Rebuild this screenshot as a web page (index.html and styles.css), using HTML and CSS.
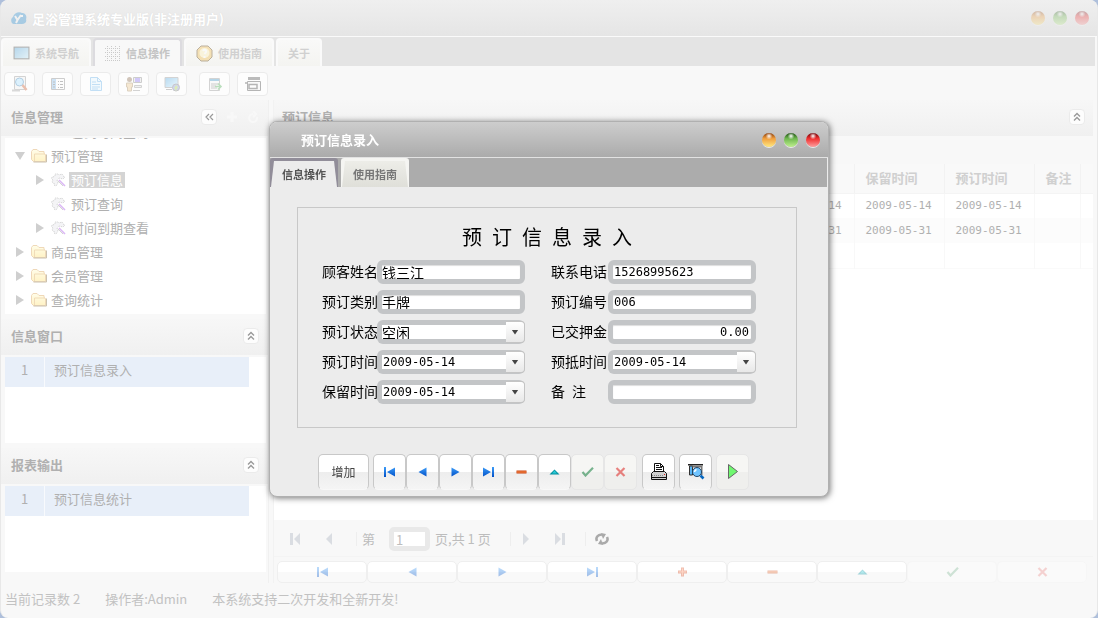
FILE: index.html
```html
<!DOCTYPE html>
<html lang="zh-CN">
<head>
<meta charset="utf-8">
<title>足浴管理系统专业版</title>
<link rel="stylesheet" href="styles.css">
</head>
<body>
<svg class="defs" aria-hidden="true">
  <defs>
    <linearGradient id="g-blue" x1="0" y1="0" x2="0" y2="1"><stop offset="0" stop-color="#3c9cf8"/><stop offset="1" stop-color="#0050c8"/></linearGradient>
    <linearGradient id="g-screen" x1="0" y1="0" x2="1" y2="1"><stop offset="0" stop-color="#3c9ad8"/><stop offset="1" stop-color="#c4ecff"/></linearGradient>
    <linearGradient id="g-folder" x1="0" y1="0" x2="0" y2="1"><stop offset="0" stop-color="#fffbc8"/><stop offset="1" stop-color="#ffe070"/></linearGradient>
  </defs>
  <symbol id="first" viewBox="0 0 13 10"><path d="M1 0h2v10H1zM12 .5v9L4 5z" fill="url(#g-blue)"/></symbol>
  <symbol id="prev" viewBox="0 0 13 10"><path d="M10.500 .5v9L2.500 5z" fill="url(#g-blue)"/></symbol>
  <symbol id="next" viewBox="0 0 13 10"><path d="M2.500 .5v9l8-4.500z" fill="url(#g-blue)"/></symbol>
  <symbol id="last" viewBox="0 0 13 10"><path d="M10 0h2v10h-2zM1 .5v9l8-4.500z" fill="url(#g-blue)"/></symbol>
  <symbol id="minus" viewBox="0 0 13 10"><path d="M1.500 3.500h10v3h-10z" fill="#c8400c"/><path d="M2 4.500h9v1H2z" fill="#ff9050"/></symbol>
  <symbol id="plus" viewBox="0 0 13 10"><path d="M5 .5h3v3h3v3H8v3H5v-3H2v-3h3z" fill="#d8481c"/><path d="M6 1.500h1v3h3v1H7v3H6v-3H3v-1h3z" fill="#ff9060"/></symbol>
  <symbol id="up" viewBox="0 0 13 10"><path d="M1.500 7.500L6.500 2.500l5 5z" fill="#0090a0"/><path d="M4 6.500l2.500-3 2.500 3z" fill="#28c8d4"/></symbol>
  <symbol id="check" viewBox="0 0 13 10"><path d="M1.500 5l3 3.500L12 .8" fill="none" stroke="#359058" stroke-width="2.200"/></symbol>
  <symbol id="cross" viewBox="0 0 13 10"><path d="M2.500 1l8 8M10.500 1l-8 8" stroke="#e04440" stroke-width="2.200"/></symbol>
  <symbol id="folder" viewBox="0 0 16 14"><path d="M.5 10.500v-8l1.500-2h4l2 2h5v2l1.500 1v7H2.500z" fill="url(#g-folder)" stroke="#d8a050"/><path d="M3.500 12V5H14" fill="none" stroke="#dca850"/><path d="M15.500 5.500v7.500H2.500" fill="none" stroke="#806838"/></symbol>
  <symbol id="gear" viewBox="0 0 16 14"><path d="M2 4l2-1 0-2 3 0 1 1 3-1 1 2 2 1-2 2-4-1-2 2 1 3-2 3-2-1 0-2-2-1 1-2-2-2z" fill="#e4e6ea" stroke="#888" stroke-dasharray="1 1"/><path d="M8 7l6 6" stroke="#a850e8" stroke-width="1.600"/><path d="M7 8l5 5" stroke="#777" stroke-width=".8"/></symbol>
  <symbol id="collapse" viewBox="0 0 10 10"><path d="M2 4.500L5 1.500l3 3M2 8.500L5 5.500l3 3" fill="none" stroke="#999" stroke-width="1.400"/></symbol>
  <symbol id="monitor" viewBox="0 0 16 14"><rect x="1" y="1" width="14" height="11" fill="url(#g-screen)" stroke="#333"/></symbol>
</svg>

<div class="window">
  <header class="titlebar">
    <svg class="logo faded" viewBox="0 0 16 14"><path d="M3 13C0 13-1 8 2 6 3 2 8 0 11 2c4 0 5 4 4 6 1 3-1 5-4 5z" fill="#2f94d8"/><path d="M4 5l2.500 4L10 4M6.500 9L5 12M10 5h2" fill="none" stroke="#fff" stroke-width="2"/></svg>
    <h1>足浴管理系统专业版(非注册用户)</h1>
    <div class="orbs faded"><button class="orb amber" aria-label="最小化"></button><button class="orb green" aria-label="最大化"></button><button class="orb red" aria-label="关闭"></button></div>
  </header>
  <nav class="tabs">
    <button class="tab"><svg class="faded" width="17" height="15"><use href="#monitor"/></svg>系统导航</button>
    <button class="tab on"><svg class="faded" width="16" height="15" viewBox="0 0 16 15"><path d="M2.500 0v15M6.500 0v15M10.500 0v15M14.500 0v15M0 2.500h16M0 6.500h16M0 10.500h16M0 14.500h16" stroke="#777" stroke-dasharray="1 1"/></svg>信息操作</button>
    <button class="tab"><svg class="faded" width="17" height="17" viewBox="0 0 17 17"><path d="M5 1h7l4 4v7l-4 4H5l-4-4V5z" fill="#f0b840" stroke="#503000"/><circle cx="8.500" cy="8" r="5" fill="#fff0b0"/><path d="M7 6c1-2 4-1 3 1l-1.500 2M8.500 11v2" fill="none" stroke="#fff" stroke-width="2"/></svg>使用指南</button>
    <button class="tab">关于</button>
  </nav>
  <div class="toolbar">
    <button aria-label="查找"><svg class="faded" viewBox="0 0 18 18"><path d="M3.500 1.500h11v13h-11z" fill="#eee" stroke="#888"/><circle cx="8.500" cy="7" r="4" fill="#a0dcff" stroke="#2878b0"/><path d="M11.500 10l4 5" stroke="#c85020" stroke-width="2.500"/><path d="M1 15.500h8" stroke="#999" stroke-width="2"/></svg></button>
    <button aria-label="列表"><svg class="faded" viewBox="0 0 18 18"><path d="M2.500 3.500h13v11h-13z" fill="#fff" stroke="#777"/><path d="M3 4h4v10H3z" fill="#78b4e8"/><path d="M4 7h2M4 9.500h2M4 12h2M9 6.500h1M11 6.500h3M9 9.500h1M11 9.500h3M9 12.500h1M11 12.500h3" stroke="#555"/></svg></button>
    <button aria-label="新建"><svg class="faded" viewBox="0 0 18 18"><path d="M3.500 2.500h7l4 4v9h-11z" fill="#e0f2ff" stroke="#58a8e8"/><path d="M10.500 2.500v4h4M5 7h4M5 9.500h8M5 12h8M5 14h6" fill="none" stroke="#58a8e8"/></svg></button>
    <button aria-label="操作员"><svg class="faded" viewBox="0 0 18 18"><path d="M8.500 2.500h8v5h-8z" fill="#ddd" stroke="#777"/><path d="M10 3h5v4h-5z" fill="#8068f0"/><path d="M9.500 10.500h7v2h-7zM8 15.500h7" fill="#ddd" stroke="#888"/><circle cx="4.500" cy="4.500" r="2.500" fill="#806040"/><path d="M1.500 8h6v4h-1v4h-4v-4h-1z" fill="#e8c080" stroke="#a08050"/></svg></button>
    <button aria-label="网络"><svg class="faded" viewBox="0 0 18 18"><path d="M2 2.500h13v10H2z" fill="url(#g-screen)" stroke="#888"/><path d="M3 14.500h6" stroke="#777"/><circle cx="13" cy="12.500" r="3.500" fill="#7888e0" stroke="#666"/><path d="M11 13l2-3 2 2-2 4z" fill="#a0c840"/></svg></button>
    <button class="apart" aria-label="导出"><svg class="faded" viewBox="0 0 18 18"><path d="M3.500 3.500h10v12h-10z" fill="#f2f2f2" stroke="#888"/><path d="M4 4h9v2H4z" fill="#308cc0"/><path d="M5 9h7M5 11h5M5 13h6" stroke="#777"/><path d="M9 11.500h6M12 8.500l3 3-3 3" fill="none" stroke="#40a848" stroke-width="1.600"/></svg></button>
    <button aria-label="打印"><svg class="faded" viewBox="0 0 18 18"><path d="M4 2h12v3H4z" fill="#444"/><path d="M3.500 6.500h13v9h-13z" fill="#f4f4f4" stroke="#333"/><path d="M1 8h3M5 9.500h8v4H5z" fill="#fff" stroke="#333" stroke-width="1.500"/></svg></button>
  </div>

  <div class="main">
    <aside class="side">
      <section class="panel grow">
        <header class="phead"><h2>信息管理</h2>
          <div class="ptools">
            <button class="mini" aria-label="收起"><svg viewBox="0 0 10 10"><path d="M5 2L2 5l3 3M9 2L6 5l3 3" fill="none" stroke="#999" stroke-width="1.200"/></svg></button>
            <button class="ghost" aria-label="添加"><svg viewBox="0 0 12 12"><path d="M6 1v10M1 6h10" stroke="#f8f8f8" stroke-width="3"/></svg></button>
            <button class="ghost" aria-label="刷新"><svg viewBox="0 0 12 12"><path d="M10 6A4 4 0 1 1 6 3M6 0l3 3-3 3" fill="none" stroke="#f8f8f8" stroke-width="2"/></svg></button>
          </div>
        </header>
        <div class="pbody treebox">
          <ul class="tree">
            <li class="sub"><i></i><svg></svg><span>已到时间查询</span></li>
            <li><i class="open"></i><svg><use href="#folder"/></svg><span>预订管理</span></li>
            <li class="sub"><i class="shut"></i><svg><use href="#gear"/></svg><span class="sel">预订信息</span></li>
            <li class="sub"><i></i><svg><use href="#gear"/></svg><span>预订查询</span></li>
            <li class="sub"><i class="shut"></i><svg><use href="#gear"/></svg><span>时间到期查看</span></li>
            <li><i class="shut"></i><svg><use href="#folder"/></svg><span>商品管理</span></li>
            <li><i class="shut"></i><svg><use href="#folder"/></svg><span>会员管理</span></li>
            <li><i class="shut"></i><svg><use href="#folder"/></svg><span>查询统计</span></li>
          </ul>
        </div>
      </section>
      <section class="panel">
        <header class="phead"><h2>信息窗口</h2><button class="mini" aria-label="折叠信息窗口"><svg><use href="#collapse"/></svg></button></header>
        <div class="pbody short"><a class="entry" href="#"><b>1</b><span>预订信息录入</span></a></div>
      </section>
      <section class="panel">
        <header class="phead"><h2>报表输出</h2><button class="mini" aria-label="折叠报表输出"><svg><use href="#collapse"/></svg></button></header>
        <div class="pbody short"><a class="entry" href="#"><b>1</b><span>预订信息统计</span></a></div>
      </section>
    </aside>

    <section class="content">
      <header class="phead"><h2>预订信息</h2><button class="mini" aria-label="折叠预订信息"><svg><use href="#collapse"/></svg></button></header>
      <div class="gridbox">
        <table>
          <colgroup><col><col class="date"><col class="date"><col class="date"><col class="note"><col class="end"></colgroup>
          <thead><tr><th></th><th></th><th>保留时间</th><th>预订时间</th><th>备注</th><th></th></tr></thead>
          <tbody>
            <tr><td></td><td>2009-05-14</td><td>2009-05-14</td><td>2009-05-14</td><td></td><td></td></tr>
            <tr><td></td><td>2009-05-31</td><td>2009-05-31</td><td>2009-05-31</td><td></td><td></td></tr>
            <tr><td></td><td></td><td></td><td></td><td></td><td></td></tr>
          </tbody>
        </table>
      </div>
      <div class="pager">
        <button aria-label="首页"><svg viewBox="0 0 12 12"><path d="M1 0h3v12H1zM11 0v12L5 6z"/></svg></button>
        <button class="step" aria-label="上一页"><svg viewBox="0 0 12 12"><path d="M9 0v12L3 6z"/></svg></button>
        <i></i>
        <label for="page">第</label><input id="page" value="1"><span>页,共 1 页</span>
        <i class="wide"></i>
        <button aria-label="下一页"><svg viewBox="0 0 12 12"><path d="M3 0v12l6-6z"/></svg></button>
        <button class="step" aria-label="末页"><svg viewBox="0 0 12 12"><path d="M8 0h3v12H8zM1 0v12l6-6z"/></svg></button>
        <i class="wide"></i>
        <button class="reload" aria-label="刷新数据"><svg viewBox="0 0 14 12"><path d="M2 8C0 4 4 1 7 2M12 4c2 4-2 7-5 6" fill="none" stroke="#aaa" stroke-width="2.600"/><path d="M6 0l5 1-3 5zM8 12l-5-1 3-5z" fill="#aaa"/></svg></button>
      </div>
      <div class="navrow">
        <button aria-label="第一条"><svg><use href="#first"/></svg></button>
        <button aria-label="上一条"><svg><use href="#prev"/></svg></button>
        <button aria-label="下一条"><svg><use href="#next"/></svg></button>
        <button aria-label="最后一条"><svg><use href="#last"/></svg></button>
        <button aria-label="新增"><svg><use href="#plus"/></svg></button>
        <button aria-label="删除"><svg><use href="#minus"/></svg></button>
        <button aria-label="编辑"><svg><use href="#up"/></svg></button>
        <button class="off" aria-label="保存" disabled><svg><use href="#check"/></svg></button>
        <button class="off" aria-label="取消" disabled><svg><use href="#cross"/></svg></button>
      </div>
    </section>
  </div>
  <footer class="status"><span>当前记录数 2</span><span>操作者:Admin</span><span>本系统支持二次开发和全新开发!</span></footer>
</div>

<div class="overlay">
  <div class="dialog" role="dialog" aria-labelledby="dlg-title">
    <header class="dtitle"><h2 id="dlg-title">预订信息录入</h2>
      <div class="orbs"><button class="orb amber" aria-label="最小化窗口"></button><button class="orb green" aria-label="最大化窗口"></button><button class="orb red" aria-label="关闭窗口"></button></div>
    </header>
    <nav class="dtabs"><button class="dtab on">信息操作</button><button class="dtab">使用指南</button></nav>
    <form class="form">
      <h3>预&ensp;订&ensp;信&ensp;息&ensp;录&ensp;入</h3>
      <div class="fields">
        <label for="name">顾客姓名</label><input class="box cjk" id="name" value="钱三江">
        <label for="tel">联系电话</label><input class="box" id="tel" value="15268995623">
        <label for="kind">预订类别</label><input class="box cjk" id="kind" value="手牌">
        <label for="code">预订编号</label><input class="box" id="code" value="006">
        <label for="state">预订状态</label><div class="combo"><select class="cjk" id="state"><option>空闲</option></select><span class="drop"></span></div>
        <label for="paid">已交押金</label><input class="box num" id="paid" value="0.00">
        <label for="booked">预订时间</label><div class="combo"><input id="booked" value="2009-05-14"><button type="button" class="drop" aria-label="选择预订时间"></button></div>
        <label for="arrive">预抵时间</label><div class="combo"><input id="arrive" value="2009-05-14"><button type="button" class="drop" aria-label="选择预抵时间"></button></div>
        <label for="keep">保留时间</label><div class="combo"><input id="keep" value="2009-05-14"><button type="button" class="drop" aria-label="选择保留时间"></button></div>
        <label for="note">备&ensp;注</label><input class="box" id="note">
      </div>
    </form>
    <div class="actions">
      <button class="add">增加</button>
      <div class="joined">
        <button aria-label="首条"><svg><use href="#first"/></svg></button>
        <button aria-label="前一条"><svg><use href="#prev"/></svg></button>
        <button aria-label="后一条"><svg><use href="#next"/></svg></button>
        <button aria-label="末条"><svg><use href="#last"/></svg></button>
        <button aria-label="删除记录"><svg><use href="#minus"/></svg></button>
        <button aria-label="编辑记录"><svg><use href="#up"/></svg></button>
        <button class="off" aria-label="提交" disabled><svg><use href="#check"/></svg></button>
        <button class="off" aria-label="撤销" disabled><svg><use href="#cross"/></svg></button>
      </div>
      <button aria-label="打印单据"><svg class="big" viewBox="0 0 18 18"><path d="M4.500 8.500v-8h6l3 3v5" fill="#fff" stroke="#111"/><path d="M6 2.500h3M6 4.500h6M6 6.500h6M10.500 .5v3h3" fill="none" stroke="#111"/><path d="M1.500 10.500l2-2h11l2 2v6h-15z" fill="#d0d0d0" stroke="#111"/><path d="M2 14.500h14" stroke="#111"/><path d="M2 12.500h11" stroke="#888" stroke-dasharray="1 1"/><path d="M14 11.500h1" stroke="#e02020"/></svg></button>
      <button aria-label="预览"><svg class="big" viewBox="0 0 18 18"><path d="M1 1h15v1.500H1z" fill="#222"/><path d="M2.500 3h3v9h-3z" fill="#58b4f4" stroke="#333"/><path d="M5.500 3h10v1.500h-10zM14 4h1.500v8H14z" fill="#777"/><circle cx="10" cy="9" r="4.500" fill="#70c4ff" stroke="#246"/><path d="M7.500 9a3 3 0 0 1 2-2.500" fill="none" stroke="#fff" stroke-width="1.600"/><path d="M13.500 12.500l3 3" stroke="#0868c0" stroke-width="2.600"/></svg></button>
      <button class="off" aria-label="执行"><svg class="big" viewBox="0 0 18 18"><path d="M4.500 1.500v14l9-7z" fill="#70f870" stroke="#666"/></svg></button>
    </div>
  </div>
</div>
</body>
</html>
```

FILE: styles.css
```css
* { box-sizing: border-box; }
body { margin: 0; background: #aebfdb; font: 13px/18px "Noto Sans CJK SC", "Noto Sans", sans-serif; color: #b0b0b0; }
h1, h2, h3, ul { margin: 0; padding: 0; font-size: 13px; }
button, input, select { font: inherit; color: inherit; margin: 0; padding: 0; border: 0; background: none; min-width: 0; }
button { display: flex; align-items: center; justify-content: center; }
svg { display: block; flex: none; }
.defs { position: absolute; width: 0; height: 0; }
.faded { opacity: .35; }

/* Main window */
.window { height: 100vh; min-height: 560px; display: flex; flex-direction: column; background: #f8f8f8; border: 1px solid #e8e8e8; border-width: 0 1px; border-radius: 8px; overflow: hidden; }
.titlebar { height: 37px; flex: none; display: flex; align-items: center; gap: 5px; padding: 0 8px 0 10px; background: linear-gradient(#efefef, #e5e5e5); border-bottom: 1px solid #fafafa; }
.titlebar h1 { flex: 1; padding-top: 1px; color: #fff; text-shadow: 0 0 1px #d4d4d4; }
.logo { width: 16px; height: 14px; }
.orbs { display: flex; gap: 8px; }
.orbs.faded { opacity: .3; }
.orb { width: 14px; height: 14px; border-radius: 50%; box-shadow: 0 1px 0 rgba(255, 255, 255, .7); }
.amber { background: radial-gradient(circle at 50% 22%, #fff 0, transparent 26%), linear-gradient(#8c3c08, #f0a040 40%, #ffe880); }
.green { background: radial-gradient(circle at 50% 22%, #fff 0, transparent 26%), linear-gradient(#1c5010, #70b850 40%, #c0f090); }
.red { background: radial-gradient(circle at 50% 22%, #fff 0, transparent 26%), linear-gradient(#700408, #f03030 40%, #ffa0a0); }

.tabs { height: 29px; flex: none; display: flex; gap: 2px; margin-right: 2px; background: #e4e4e4; }
.tab { height: 28px; margin-top: 1px; padding: 0 10px; gap: 5px; font-size: 11px; font-weight: bold; color: #d0d0d0; background: linear-gradient(#f9f9f8, #f4f4f1); border: 1px solid #fafafa; border-width: 2px 2px 0; border-radius: 4px 4px 0 0; }
.tab.on { color: #c4c4c4; background: #f8f8f8; border-color: #dcdbdf; }

.toolbar { height: 34px; flex: none; display: flex; align-items: center; gap: 7px; padding: 2px 3px 0; }
.toolbar button { width: 31px; height: 24px; }
.toolbar button, .mini { background: #fdfdfd; border: 1px solid #ebebeb; border-radius: 4px; }
.toolbar .apart { margin-left: 5px; }
.toolbar svg { width: 18px; height: 18px; }

.main { flex: 1; min-height: 0; display: flex; gap: 4px; }
.side { width: 268px; flex: none; display: flex; flex-direction: column; gap: 5px; padding-bottom: 11px; border-right: 1px solid #f0f0f0; }
.panel.grow { flex: 1; min-height: 0; display: flex; flex-direction: column; }
.phead { height: 36px; flex: none; display: flex; align-items: center; justify-content: space-between; padding: 0 8px 2px 10px; background: linear-gradient(#f7f7f7, #f0f0f0); }
.side .phead { padding-right: 9px; }
.mini { width: 16px; height: 16px; }
.mini svg { width: 10px; height: 10px; }
.ptools { display: flex; gap: 9px; }
.ghost svg { width: 12px; height: 12px; }
.pbody { margin: 2px 2px 0 4px; background: #fff; }
.short { height: 86px; }
.treebox { flex: 1; min-height: 0; overflow: hidden; }
.tree { list-style: none; margin-top: -18px; }
.tree li { height: 24px; display: flex; align-items: center; padding-left: 10px; }
.tree .sub { padding-left: 30px; }
.tree i { width: 16px; flex: none; }
.tree i::before { content: ""; display: block; width: 8px; height: 10px; background: #cfcfcf; }
.tree i:not(.open):not(.shut)::before { background: none; }
.tree .shut::before { clip-path: polygon(0 0, 100% 50%, 0 100%); margin-left: 1px; }
.tree .open::before { width: 10px; height: 8px; clip-path: polygon(0 0, 100% 0, 50% 100%); }
.tree svg { width: 16px; height: 14px; opacity: .4; }
.tree span { padding: 0 2px; margin-left: 2px; line-height: 16px; }
.tree .sel { background: #d4d4d4; color: #fff; }
.entry { display: flex; width: 244px; height: 30px; color: inherit; text-decoration: none; background: #e8eff9; line-height: 25px; }
.entry b { width: 40px; font-weight: normal; text-align: center; border-right: 1px solid #f8fafd; }
.entry span { padding-left: 9px; }

.content { flex: 1; min-width: 0; display: flex; flex-direction: column; margin-right: 4px; border-left: 1px solid #f2f2f2; }
.content > .phead { padding-left: 8px; }
.gridbox { flex: 1; min-height: 0; padding-top: 28px; background: linear-gradient(#f8f8f8 28px, #fff 28px); }
table { width: 100%; table-layout: fixed; border-collapse: collapse; }
.date { width: 90px; } .note { width: 46px; } .end { width: 13px; }
th, td { height: 25px; padding: 0 0 0 11px; text-align: left; border-left: 1px solid #f8f8f8; white-space: nowrap; }
th { height: 29px; background: #f9f9f9; border-color: #f2f2f2; color: #d0d0d0; border-bottom: 1px solid #f4f4f4; }
td { font-family: "DejaVu Sans Mono", monospace; font-size: 11px; }
tbody tr:nth-child(2) { background: #fcfcfc; }
tbody tr:nth-child(3) { border-bottom: 1px solid #fafafa; }

.pager { height: 37px; flex: none; display: flex; align-items: center; padding: 2px 0 0 15px; color: #bdbdbd; border-bottom: 1px solid #f4f4f4; }
.pager svg { width: 12px; height: 12px; fill: #dadde2; }
.pager .step { margin-left: 22px; }
.pager i { width: 1px; height: 14px; margin: 0 5px 0 21px; background: #eee; }
.pager i.wide { margin: 0 9px 0 19px; }
.pager input { width: 41px; height: 24px; margin: 0 5px 0 14px; padding-left: 2px; border: 5px solid #e9e9e9; border-radius: 5px; background: #fff; }
.pager .reload svg { width: 14px; height: 14px; }
.navrow { height: 26px; flex: none; display: flex; padding: 4px 6px 0 3px; }
.navrow button { flex: 1; background: linear-gradient(#fff 50%, #f9f9f9 50%); border: 1px solid #efefef; border-radius: 5px; }
.navrow svg, .joined svg { width: 13px; height: 10px; }
.navrow svg { opacity: .35; }
.navrow .off { background: #fafafa; border-color: #f6f6f6; }
.navrow .off svg { opacity: .22; }
.status { height: 35px; flex: none; display: flex; align-items: center; gap: 25px; padding: 0 4px 4px; color: #c2c2c2; }

/* Entry dialog */
.overlay { position: fixed; inset: 0; display: flex; align-items: center; justify-content: center; }
.dialog { width: 560px; border: 1px solid #b0b0b0; border-radius: 8px; overflow: hidden; background: #ececec; box-shadow: 1px 1px 6px rgba(0, 0, 0, .55); color: #444; }
.dtitle { height: 36px; display: flex; align-items: center; justify-content: space-between; padding: 0 8px 0 31px; background: linear-gradient(#cdcdcd, #ababab); border-bottom: 1px solid #e2e2e2; }
.dtitle h2 { color: #fff; }
.dtabs { height: 29px; display: flex; gap: 3px; margin-right: 1px; background: #acacac; }
.dtab { position: relative; z-index: 0; padding: 3px 12px 0; font-size: 11px; font-weight: bold; color: #777; background: #f5f5f2; border-radius: 3px 3px 0 0; }
.dtab::before { content: ""; position: absolute; z-index: -1; inset: 3px 1px 0; background: linear-gradient(#ededE8, #dfdfd9); clip-path: polygon(3px 0, calc(100% - 3px) 0, 100% 100%, 0 100%); }
.dtab.on { color: #555; background: #918d99; }
.dtab.on::before { background: #ececec; }
.form { margin: 20px 31px 0 27px; padding: 16px 24px 23px; border: 1px solid #c8c8c8; }
.form h3 { margin-bottom: 10px; font-size: 20px; line-height: 26px; font-weight: normal; text-align: center; color: #000; }
.fields { display: grid; grid-template-columns: 55px 148px 83px 148px; row-gap: 6px; font-size: 14px; color: #000; }
.fields label { height: 24px; line-height: 22px; white-space: nowrap; }
.fields > :nth-child(4n + 3) { margin-left: 26px; }
.fields input, .fields select { font: 12px/14px "DejaVu Sans Mono", monospace; color: #000; background: #fff; width: 100%; height: 14px; padding-left: 1px; border-radius: 0; }
.fields .cjk { font: 14px/14px "Noto Sans CJK SC", sans-serif; padding-left: 0; }
.fields input.box { height: 24px; border: 5px solid #c3c5c7; border-radius: 6px; box-shadow: inset 0 1px 1px #ddd; }
.fields .num { text-align: right; padding-right: 2px; }
.combo { height: 24px; display: flex; align-items: center; padding-left: 5px; background: #c3c5c7; border-radius: 6px; }
.combo select { appearance: none; }
.drop { width: 19px; height: 22px; flex: none; display: flex; align-items: center; justify-content: center; background: linear-gradient(#fff, #e8e8e8); border: 1px solid #c4c4c4; border-left: 0; border-radius: 0 4px 4px 0; }
.drop::before { content: ""; width: 7px; height: 5px; background: #444; clip-path: polygon(0 0, 100% 0, 50% 100%); }
.actions { display: flex; gap: 4px; padding: 26px 48px 6px; }
.actions button { width: 33px; height: 36px; background: linear-gradient(#fff 50%, #ededed 50%, #f5f5f5); border: 1px solid #c8c8c8; border-bottom-color: #f8f8f8; border-radius: 5px; }
.actions .add { width: 51px; font-size: 12px; }
.joined { display: flex; margin-right: 1px; }
.actions .off { border-color: #e6e6e6; background: linear-gradient(#f6f6f4 50%, #efefed 50%); }
.joined .off svg { opacity: .65; }
.actions .big { width: 18px; height: 18px; }
```
